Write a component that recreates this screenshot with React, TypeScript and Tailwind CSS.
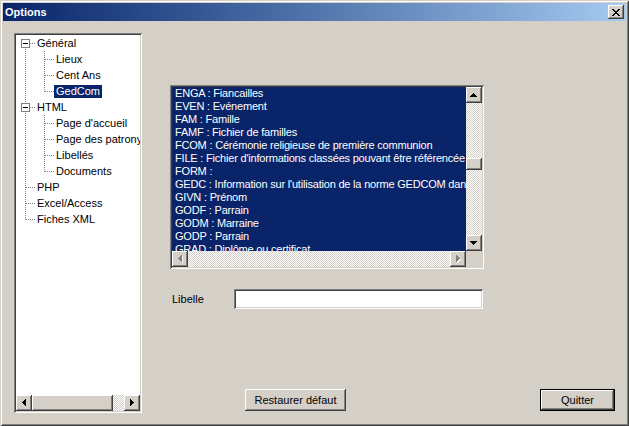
import React from 'react';

const raised =
  'shadow-[inset_-1px_-1px_#404040,inset_1px_1px_#ffffff,inset_-2px_-2px_#808080,inset_2px_2px_#d4d0c8]';
const sunken =
  'shadow-[inset_1px_1px_#808080,inset_-1px_-1px_#ffffff,inset_2px_2px_#404040,inset_-2px_-2px_#d4d0c8]';
const checker =
  'bg-[image:repeating-conic-gradient(#d4d0c8_0_25%,#ffffff_0_50%)] bg-[length:2px_2px]';

type Dir = 'up' | 'down' | 'left' | 'right';

// pixel arrows like the classic scrollbar glyphs
function Arrow({ dir, disabled }: { dir: Dir; disabled?: boolean }) {
  const rows = [1, 3, 5, 7];
  const rects = rows.map((w, i) => {
    const off = (7 - w) / 2;
    if (dir === 'up') return { x: off, y: i, w, h: 1 };
    if (dir === 'down') return { x: off, y: 3 - i, w, h: 1 };
    if (dir === 'left') return { x: i, y: off, w: 1, h: w };
    return { x: 3 - i, y: off, w: 1, h: w };
  });
  const vertical = dir === 'up' || dir === 'down';
  const W = vertical ? 8 : 5;
  const H = vertical ? 5 : 8;
  return (
    <svg width={W} height={H} viewBox={`0 0 ${W} ${H}`} shapeRendering="crispEdges">
      {disabled &&
        rects.map((r, i) => (
          <rect key={'s' + i} x={r.x + 1} y={r.y + 1} width={r.w} height={r.h} fill="#ffffff" />
        ))}
      {rects.map((r, i) => (
        <rect key={i} x={r.x} y={r.y} width={r.w} height={r.h} fill={disabled ? '#808080' : '#000000'} />
      ))}
    </svg>
  );
}

function ScrollBtn({ dir, disabled }: { dir: Dir; disabled?: boolean }) {
  return (
    <div className={`w-[16px] h-[16px] shrink-0 bg-[#d4d0c8] flex items-center justify-center ${raised}`}>
      <Arrow dir={dir} disabled={disabled} />
    </div>
  );
}

function CloseGlyph() {
  const px: [number, number][] = [];
  const pattern = ['XX....XX', '.XX..XX.', '..XXXX..', '...XX...', '..XXXX..', '.XX..XX.', 'XX....XX'];
  pattern.forEach((row, y) => row.split('').forEach((c, x) => c === 'X' && px.push([x, y])));
  return (
    <svg width="8" height="7" viewBox="0 0 8 7" shapeRendering="crispEdges">
      {px.map(([x, y]) => (
        <rect key={`${x}-${y}`} x={x} y={y} width="1" height="1" fill="#000" />
      ))}
    </svg>
  );
}

type Node = { label: string; level: 0 | 1; expander?: boolean; last?: boolean; selected?: boolean };

const tree: Node[] = [
  { label: 'Général', level: 0, expander: true },
  { label: 'Lieux', level: 1 },
  { label: 'Cent Ans', level: 1 },
  { label: 'GedCom', level: 1, last: true, selected: true },
  { label: 'HTML', level: 0, expander: true },
  { label: "Page d'accueil", level: 1 },
  { label: 'Page des patronymes', level: 1 },
  { label: 'Libellés', level: 1 },
  { label: 'Documents', level: 1, last: true },
  { label: 'PHP', level: 0 },
  { label: 'Excel/Access', level: 0 },
  { label: 'Fiches XML', level: 0, last: true },
];

function Gutter({ node, first }: { node: Node; first: boolean }) {
  const w = node.level === 0 ? 19 : 38;
  const dot = { stroke: '#808080', strokeWidth: 1, strokeDasharray: '1 1' };
  return (
    <svg width={w} height="16" viewBox={`0 0 ${w} 16`} shapeRendering="crispEdges" className="shrink-0">
      {/* root level line */}
      <line x1="9.5" y1={first ? 8 : 0} x2="9.5" y2={node.level === 0 && node.last ? 9 : 16} {...dot} />
      {node.level === 0 && <line x1="10" y1="8.5" x2="19" y2="8.5" {...dot} />}
      {node.level === 1 && (
        <>
          <line x1="28.5" y1="0" x2="28.5" y2={node.last ? 9 : 16} {...dot} />
          <line x1="29" y1="8.5" x2="38" y2="8.5" {...dot} />
        </>
      )}
      {node.expander && (
        <>
          <rect x="5.5" y="4.5" width="8" height="8" fill="#fff" stroke="#808080" />
          <rect x="7" y="8" width="5" height="1" fill="#000" />
        </>
      )}
    </svg>
  );
}

function TreePanel() {
  return (
    <div className={`w-[128px] h-[380px] shrink-0 bg-white p-[2px] flex flex-col ${sunken}`}>
      <div className="flex-1 overflow-hidden">
        {tree.map((n, i) => (
          <div key={n.label} className="flex items-center h-[16px] whitespace-nowrap">
            <Gutter node={n} first={i === 0} />
            <span
              className={`h-[13px] leading-[13px] px-[2px] ${n.selected ? 'bg-[#0a246a] text-white' : ''}`}
            >
              {n.label}
            </span>
          </div>
        ))}
      </div>
      <div className="flex h-[16px]">
        <ScrollBtn dir="left" />
        <div className={`w-[81px] h-[16px] bg-[#d4d0c8] ${raised}`} />
        <div className={`flex-1 ${checker}`} />
        <ScrollBtn dir="right" />
      </div>
    </div>
  );
}

const tags = [
  'ENGA : Fiancailles',
  'EVEN : Evénement',
  'FAM : Famille',
  'FAMF : Fichier de familles',
  'FCOM : Cérémonie religieuse de première communion',
  "FILE : Fichier d'informations classées pouvant être référencée",
  'FORM :',
  "GEDC : Information sur l'utilisation de la norme GEDCOM dans",
  'GIVN : Prénom',
  'GODF : Parrain',
  'GODM : Marraine',
  'GODP : Parrain',
  'GRAD : Diplôme ou certificat',
];

function ListBox() {
  return (
    <div
      className={`w-[314px] h-[184px] p-[2px] bg-[#d4d0c8] grid grid-cols-[294px_16px] grid-rows-[164px_16px] ${sunken}`}
    >
      <div className="bg-[#0a246a] text-white overflow-hidden tracking-[-0.2px]">
        {tags.map((t) => (
          <div key={t} className="h-[13px] leading-[13px] pl-[3px] whitespace-nowrap">
            {t}
          </div>
        ))}
      </div>
      <div className={`flex flex-col ${checker}`}>
        <ScrollBtn dir="up" />
        <div className={`w-[16px] h-[12px] mt-[55px] bg-[#d4d0c8] ${raised}`} />
        <div className="flex-1" />
        <ScrollBtn dir="down" />
      </div>
      <div className={`flex ${checker}`}>
        <ScrollBtn dir="left" disabled />
        <div className="flex-1" />
        <ScrollBtn dir="right" disabled />
      </div>
      <div className="bg-[#d4d0c8]" />
    </div>
  );
}

export default function App() {
  return (
    <div
      className={"w-[629px] h-[426px] bg-[#d4d0c8] p-[3px] flex flex-col overflow-hidden text-[11px] text-black font-['Liberation_Sans',Arial,sans-serif] shadow-[inset_1px_1px_#d4d0c8,inset_-1px_-1px_#404040,inset_2px_2px_#ffffff,inset_-2px_-2px_#808080]"}
    >
      <div className="h-[18px] shrink-0 flex items-center justify-between pl-[2px] pr-[2px] bg-linear-to-r from-[#0a246a] to-[#a6caf0]">
        <span className="text-white font-bold">Options</span>
        <div className={`w-[16px] h-[14px] bg-[#d4d0c8] flex items-center justify-center ${raised}`}>
          <CloseGlyph />
        </div>
      </div>

      <div className="flex pt-[12px] pl-[11px]">
        <TreePanel />

        <div className="flex flex-col pl-[28px] pt-[52px]">
          <ListBox />

          <div className="flex items-center mt-[20px] h-[20px]">
            <span className="w-[64px] pl-[2px]">Libelle</span>
            <div className={`w-[249px] h-[20px] bg-white ${sunken}`} />
          </div>

          <div className="flex mt-[80px]">
            <button
              className={`ml-[75px] w-[101px] h-[22px] bg-[#d4d0c8] flex items-center justify-center ${raised}`}
            >
              Restaurer défaut
            </button>
            <button className="ml-[194px] w-[75px] h-[22px] border border-black bg-[#d4d0c8]">
              <div
                className={`w-full h-full flex items-center justify-center ${raised}`}
              >
                Quitter
              </div>
            </button>
          </div>
        </div>
      </div>
    </div>
  );
}
